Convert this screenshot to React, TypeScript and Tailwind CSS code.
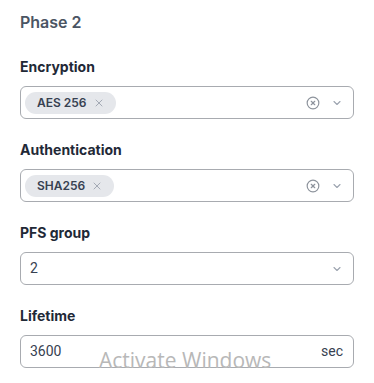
import React from "react";

const ChevronDown = () => (
  <svg width="12" height="12" viewBox="0 0 24 24" fill="none" stroke="#9ca3af" strokeWidth="2.2" strokeLinecap="round" strokeLinejoin="round">
    <path d="m6 9 6 6 6-6" />
  </svg>
);

const CircleX = () => (
  <svg width="14" height="14" viewBox="0 0 24 24" fill="none" stroke="#8d939c" strokeWidth="2" strokeLinecap="round" strokeLinejoin="round">
    <circle cx="12" cy="12" r="10" />
    <path d="m15 9-6 6" />
    <path d="m9 9 6 6" />
  </svg>
);

const SmallX = () => (
  <svg width="12" height="12" viewBox="0 0 24 24" fill="none" stroke="#9ca3af" strokeWidth="1.8" strokeLinecap="round" strokeLinejoin="round">
    <path d="M18 6 6 18" />
    <path d="m6 6 12 12" />
  </svg>
);

const Label = ({ children, first }: { children: React.ReactNode; first?: boolean }) => (
  <div className={`text-[14px] leading-[20px] font-bold text-[#1f2937] ${first ? "mt-[25px]" : "mt-[21px]"} mb-[9px]`}>
    {children}
  </div>
);

const MultiSelect = ({ value }: { value: string }) => (
  <div className="h-[33px] w-[334px] rounded-[6px] border border-[#a8abb0] flex items-center pl-[4px] pr-[10px]">
    <div className="h-[22px] rounded-full bg-[#e5e7eb] flex items-center pl-[12px] pr-[11px] gap-[6px]">
      <span className="text-[12px] font-semibold text-[#374151]">{value}</span>
      <SmallX />
    </div>
    <div className="flex-1" />
    <div className="flex items-center gap-[11px]">
      <CircleX />
      <ChevronDown />
    </div>
  </div>
);

export default function App() {
  return (
    <div className="relative w-[374px] h-[383px] bg-white px-[20px] pt-[12px]" style={{ fontFamily: "Inter, 'Noto Sans', sans-serif" }}>
      <div className="text-[16px] leading-[20px] font-semibold text-[#4b5563]">Phase 2</div>

      <Label first>Encryption</Label>
      <MultiSelect value="AES 256" />

      <Label>Authentication</Label>
      <MultiSelect value="SHA256" />

      <Label>PFS group</Label>
      <div className="h-[33px] w-[334px] rounded-[6px] border border-[#a8abb0] flex items-center pl-[9px] pr-[10px]">
        <span className="text-[14px] text-[#374151]" style={{ fontFamily: "Roboto, Arial, sans-serif" }}>2</span>
        <div className="flex-1" />
        <ChevronDown />
      </div>

      <Label>Lifetime</Label>
      <div className="h-[33px] w-[334px] rounded-[6px] border border-[#a8abb0] flex items-center pl-[9px] pr-[10px]" style={{ fontFamily: "Roboto, Arial, sans-serif" }}>
        <span className="text-[14px] text-[#374151]">3600</span>
        <div className="flex-1" />
        <span className="text-[14px] text-[#374151]">sec</span>
      </div>

      <div className="absolute left-[99px] top-[346px] text-[21px] leading-[28px] text-[#b8b8b8]" style={{ fontFamily: "'Open Sans', 'Noto Sans', sans-serif" }}>
        Activate Windows
      </div>
    </div>
  );
}
